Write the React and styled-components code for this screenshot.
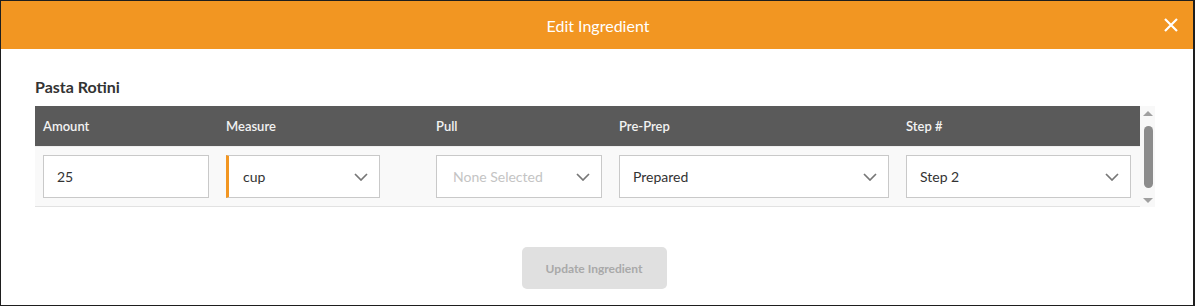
import React from "react";
import styled, { createGlobalStyle } from "styled-components";

const GlobalStyle = createGlobalStyle`
  body {
    margin: 0;
    font-family: Lato, "Open Sans", sans-serif;
    background: #fff;
  }
`;

const columns = [
  { label: "Amount", width: 183 },
  { label: "Measure", width: 210 },
  { label: "Pull", width: 183 },
  { label: "Pre-Prep", width: 287 },
  { label: "Step #", width: 242 },
];
const gridCols = columns.map((c) => c.width + "px").join(" ");

const Chevron = () => (
  <svg width="14" height="8" viewBox="0 0 14 8" fill="none">
    <path d="M1 1l6 6 6-6" stroke="#777" strokeWidth="1.7" />
  </svg>
);

const App = () => {
  return (
    <>
      <GlobalStyle />
      <Modal>
        <Header>
          <span />
          <Title>Edit Ingredient</Title>
          <CloseButton aria-label="close">
            <svg width="14" height="14" viewBox="0 0 14 14">
              <path d="M1 1l12 12M13 1L1 13" stroke="#fff" strokeWidth="2.2" />
            </svg>
          </CloseButton>
        </Header>
        <Body>
          <Name>Pasta Rotini</Name>
          <TableWrap>
            <Table>
              <HeadRow>
                {columns.map((c) => (
                  <HeadCell key={c.label}>{c.label}</HeadCell>
                ))}
              </HeadRow>
              <DataRow>
                <Cell>
                  <Field $w={166}>25</Field>
                </Cell>
                <Cell>
                  <Field $w={154} $accent>
                    cup
                    <Chevron />
                  </Field>
                </Cell>
                <Cell>
                  <Field $w={166} $placeholder>
                    None Selected
                    <Chevron />
                  </Field>
                </Cell>
                <Cell>
                  <Field $w={270}>
                    Prepared
                    <Chevron />
                  </Field>
                </Cell>
                <Cell>
                  <Field $w={225}>
                    Step 2
                    <Chevron />
                  </Field>
                </Cell>
              </DataRow>
            </Table>
            <Scrollbar>
              <Arrow $up />
              <Thumb />
              <Arrow />
            </Scrollbar>
          </TableWrap>
          <Footer>
            <UpdateButton disabled>Update Ingredient</UpdateButton>
          </Footer>
        </Body>
      </Modal>
    </>
  );
};

const Modal = styled.div`
  width: 1195px;
  height: 306px;
  box-sizing: border-box;
  border: 1px solid #1e1e1e;
  border-right-width: 2px;
  background: #fff;
  display: flex;
  flex-direction: column;
`;

const Header = styled.div`
  height: 48px;
  background: #f29622;
  display: grid;
  grid-template-columns: 1fr auto 1fr;
  align-items: center;
`;

const Title = styled.div`
  color: #fff;
  font-size: 16px;
  padding-left: 2px;
`;

const CloseButton = styled.button`
  justify-self: end;
  margin-right: 15px;
  background: none;
  border: 0;
  padding: 0;
  display: flex;
  cursor: pointer;
`;

const Body = styled.div`
  padding: 0 0 0 34px;
  display: flex;
  flex-direction: column;
`;

const Name = styled.div`
  font-size: 16px;
  font-weight: 700;
  color: #333;
  margin: 28px 0 0;
  line-height: 20px;
  height: 29px;
`;

const TableWrap = styled.div`
  display: flex;
  width: 1120px;
`;

const Table = styled.div`
  width: 1105px;
`;

const HeadRow = styled.div`
  display: grid;
  grid-template-columns: ${gridCols};
  height: 40px;
  background: #5a5a5a;
  border-bottom: 1px solid #eee;
`;

const HeadCell = styled.div`
  color: #f2f2f2;
  font-size: 13px;
  font-weight: 600;
  padding-left: 8px;
  display: flex;
  align-items: center;
`;

const DataRow = styled.div`
  display: grid;
  grid-template-columns: ${gridCols};
  background: #f9f9f9;
  padding: 8px 0 8px;
  border-bottom: 1px solid #e2e2e2;
`;

const Cell = styled.div`
  padding-left: 8px;
  display: flex;
`;

const Field = styled.div`
  width: ${(p) => p.$w}px;
  height: 43px;
  box-sizing: border-box;
  background: #fff;
  border: 1px solid #c9c9c9;
  border-left: ${(p) => (p.$accent ? "3px solid #f29622" : "1px solid #c9c9c9")};
  padding: 0 11px 0 ${(p) => (p.$placeholder ? 16 : p.$accent ? 14 : 13)}px;
  display: flex;
  align-items: center;
  justify-content: space-between;
  font-size: 14px;
  color: ${(p) => (p.$placeholder ? "#c4c4c4" : "#333")};
`;

const Scrollbar = styled.div`
  width: 15px;
  height: 101px;
  background: #f8f8f8;
  display: flex;
  flex-direction: column;
  align-items: center;
  padding: 5px 0 4px;
  box-sizing: border-box;
  justify-content: space-between;
`;

const Arrow = styled.div`
  width: 0;
  height: 0;
  border-left: 5px solid transparent;
  border-right: 5px solid transparent;
  ${(p) => (p.$up ? "border-bottom: 5px solid #a0a0a0;" : "border-top: 5px solid #a0a0a0;")}
`;

const Thumb = styled.div`
  width: 9px;
  height: 62px;
  border-radius: 5px;
  background: #8c8c8c;
  margin-left: 1px;
`;

const Footer = styled.div`
  display: flex;
  justify-content: center;
  margin-top: 40px;
  padding-right: 40px;
`;

const UpdateButton = styled.button`
  width: 145px;
  height: 42px;
  border: 0;
  border-radius: 5px;
  background: #e0e0e0;
  color: #a9a9a9;
  font-family: Lato, sans-serif;
  font-size: 12px;
  font-weight: 700;
`;

export default App;
